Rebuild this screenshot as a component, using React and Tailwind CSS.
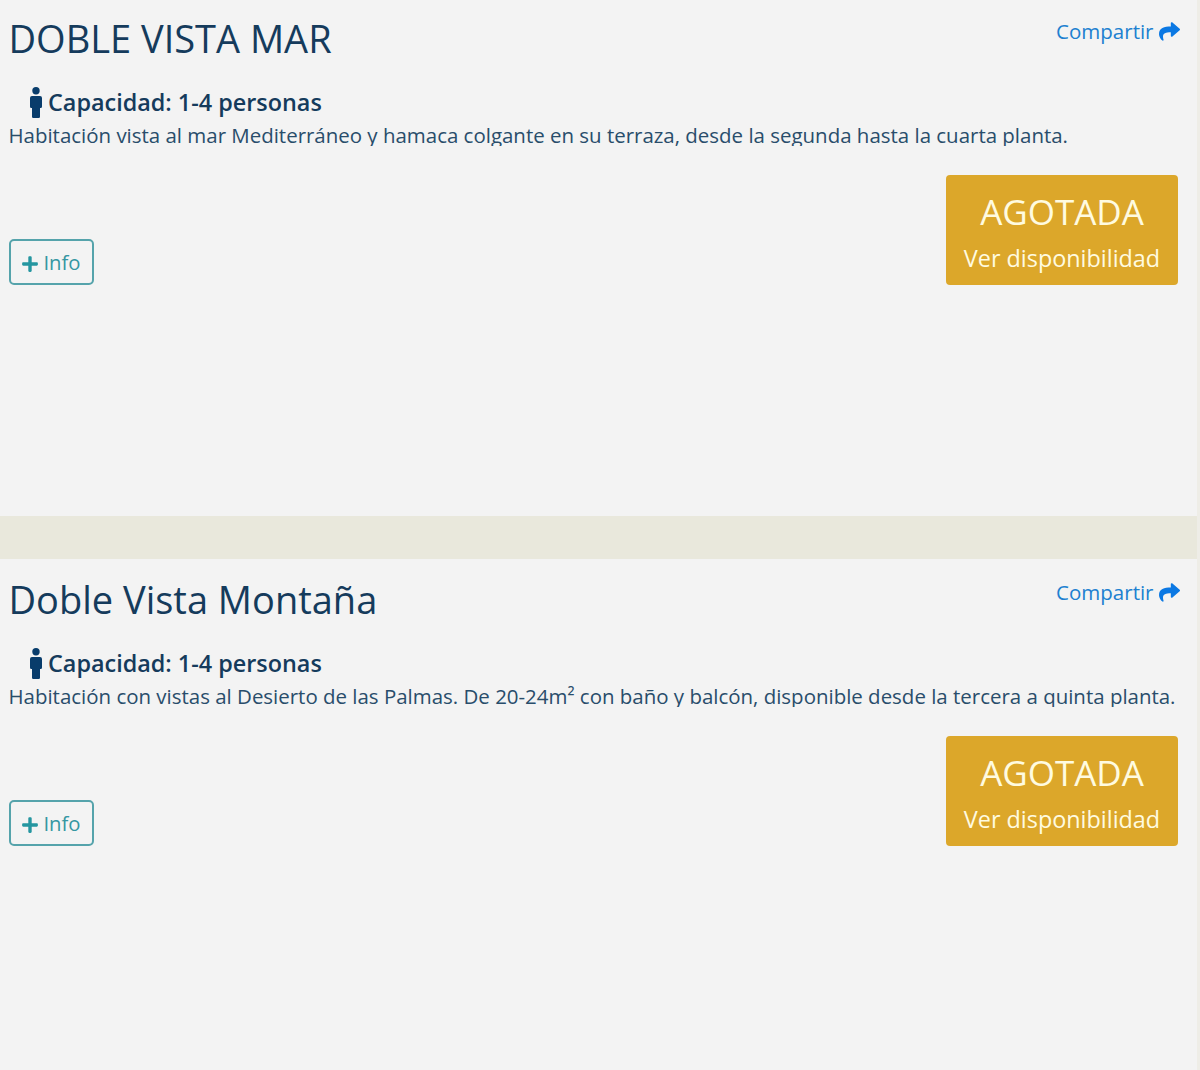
import React from "react";
import { FaPlus, FaShare } from "react-icons/fa";

const rooms = [
  {
    id: "mar",
    name: "DOBLE VISTA MAR",
    capacity: "1-4 personas",
    description:
      "Habitación vista al mar Mediterráneo y hamaca colgante en su terraza, desde la segunda hasta la cuarta planta.",
    className: "h-[516px]",
  },
  {
    id: "montana",
    name: "Doble Vista Montaña",
    capacity: "1-4 personas",
    description:
      "Habitación con vistas al Desierto de las Palmas. De 20-24m² con baño y balcón, disponible desde la tercera a quinta planta.",
    className: "h-[511px] pt-[2px]",
  },
];

function PersonIcon({ className }) {
  return (
    <svg viewBox="0 0 12 31" fill="currentColor" className={className} aria-hidden="true">
      <circle cx="6" cy="3.8" r="3.7" />
      <path d="M2 9H10Q12 9 12 11V19.5Q12 21 10.7 21H10V29.7Q10 31 8.7 31H3.3Q2 31 2 29.7V21H1.3Q0 21 0 19.5V11Q0 9 2 9Z" />
    </svg>
  );
}

function ShareLink() {
  return (
    <a href="#" className="mt-[15px] flex items-center gap-[5px] text-[20.5px] leading-8 text-[#2080d0]">
      Compartir
      <FaShare className="size-[21px] text-[#0b78e3]" />
    </a>
  );
}

function RoomCard({ room }) {
  return (
    <article className={`shrink-0 bg-[#f3f3f3] pl-[8.5px] pr-[17.5px] ${room.className}`}>
      <div className="flex h-[79px] items-start justify-between">
        <h2 className="mt-[13px] whitespace-nowrap text-[38px] leading-[50px] text-[#153b5c]">{room.name}</h2>
        <ShareLink />
      </div>

      <div className="flex h-[45px] items-center gap-[6px] pl-[21.5px] text-[#153b5c]">
        <PersonIcon className="mt-[2px] h-[31px] w-3 text-[#083c6b]" />
        <span className="whitespace-nowrap text-[23.4px] font-semibold leading-8">Capacidad: {room.capacity}</span>
      </div>

      {/* the box is one line tall and cuts the descenders */}
      <p className="h-[22px] overflow-hidden whitespace-nowrap text-[20.47px] leading-[23px] text-[#294d6b]">
        {room.description}
      </p>

      <div className="mt-[29px] flex items-end justify-between">
        <button className="flex h-[46px] w-[85px] items-center justify-center gap-[4px] rounded-[5px] border-2 border-[#55a3ab] text-[20.3px] text-[#3597a2]">
          <FaPlus className="mt-[3px] size-[18px] text-[#2596a0]" />
          Info
        </button>
        <button className="mr-[1.5px] flex h-[110px] w-[232px] flex-col items-center rounded-[4px] bg-[#dca72a] pt-[13px] text-[#fffbe0]">
          <span className="text-[35px] leading-[48px]">AGOTADA</span>
          <span className="whitespace-nowrap text-[23.4px] leading-[44px]">Ver disponibilidad</span>
        </button>
      </div>
    </article>
  );
}

export default function App() {
  return (
    <main className="flex h-[1070px] w-[1200px] flex-col gap-[43px] overflow-hidden border-r-[3px] border-[#eeede7] bg-[#e9e8dc] font-['Open_Sans',sans-serif]">
      {rooms.map((room) => (
        <RoomCard key={room.id} room={room} />
      ))}
    </main>
  );
}
